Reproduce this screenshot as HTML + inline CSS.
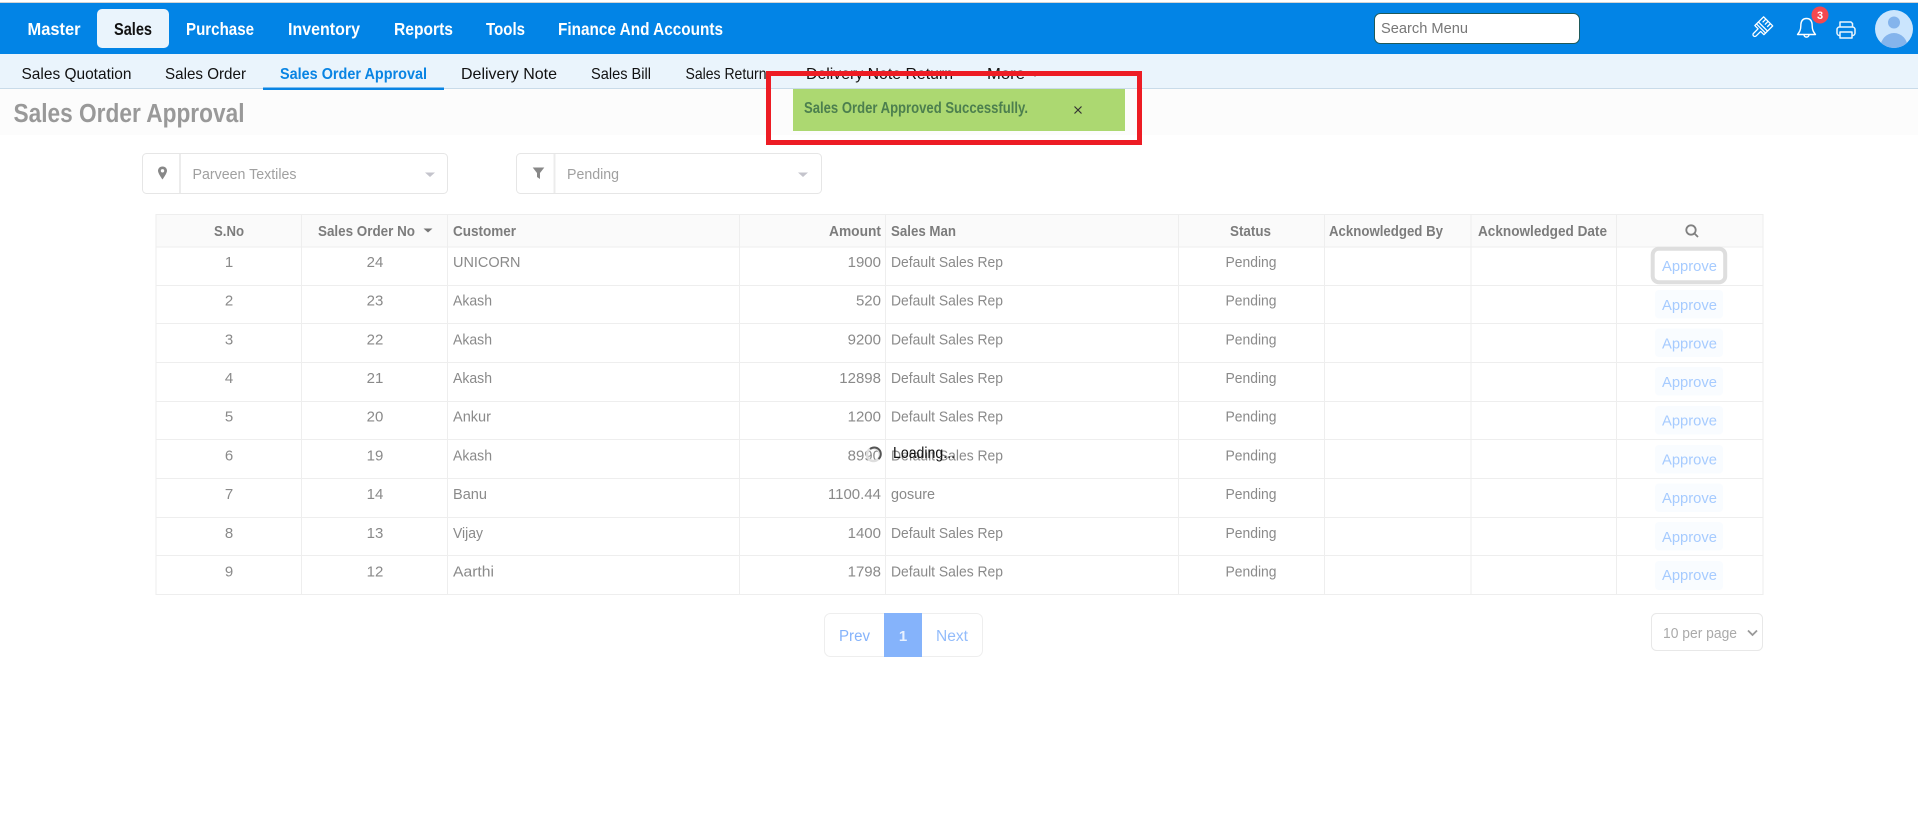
<!DOCTYPE html>
<html lang="en">
<head>
<meta charset="utf-8">
<title>Sales Order Approval</title>
<style>
html,body{margin:0;padding:0;background:#fff;overflow:hidden}
svg{display:block;font-family:"Liberation Sans",Arial,sans-serif}
.nav{font-size:17.5px;font-weight:700;fill:#fff}
.sub{font-size:16px;fill:#111}
.h{font-size:14.8px;font-weight:700;fill:#7c7c7c}
.d{font-size:15.2px;fill:#8a8a8a}
.n{font-size:15px;fill:#8a8a8a}
.a{font-size:15.2px;fill:#a6cbff}
.btn{fill:#f9fcff}
.f{font-size:15.2px;fill:#a0a0a0}
.m{text-anchor:middle}
.e{text-anchor:end}
</style>
</head>
<body>
<svg width="1918" height="837" viewBox="0 0 1918 837" xmlns="http://www.w3.org/2000/svg">
<rect width="1918" height="837" fill="#fff"/>
<rect y="2" width="1918" height="1" fill="#d4d4d4"/>
<!-- top nav -->
<rect y="3" width="1918" height="51" fill="#0284e6"/>
<rect x="97" y="9" width="72" height="39" rx="5" fill="#eaf4fc"/>
<text class="nav" x="27.5" y="35" textLength="53" lengthAdjust="spacingAndGlyphs">Master</text>
<text class="nav" x="114" y="35" textLength="38" lengthAdjust="spacingAndGlyphs" style="fill:#111">Sales</text>
<text class="nav" x="186" y="35" textLength="68" lengthAdjust="spacingAndGlyphs">Purchase</text>
<text class="nav" x="288" y="35" textLength="72" lengthAdjust="spacingAndGlyphs">Inventory</text>
<text class="nav" x="394" y="35" textLength="59" lengthAdjust="spacingAndGlyphs">Reports</text>
<text class="nav" x="486" y="35" textLength="39" lengthAdjust="spacingAndGlyphs">Tools</text>
<text class="nav" x="558" y="35" textLength="165" lengthAdjust="spacingAndGlyphs">Finance And Accounts</text>
<!-- search -->
<rect x="1374.5" y="13.5" width="205" height="30" rx="6" fill="#fff" stroke="#1f5a5a"/>
<text x="1381" y="33" font-size="14.5" fill="#777" textLength="87" lengthAdjust="spacingAndGlyphs">Search Menu</text>
<!-- brush -->
<g transform="translate(1761,28.5) rotate(45) scale(.92)" fill="none" stroke="#fff" stroke-width="1.4" stroke-linejoin="round">
<path d="M-7 -11H7V0H-7Z"/>
<path d="M-7 -3H7M-3.5 -11V-6M0 -11V-6M3.5 -11V-6"/>
<path d="M-7 0V2.5H-2V9.5A2 2 0 0 0 2 9.5V2.5H7V0"/>
</g>
<!-- bell -->
<g fill="none" stroke="#fff" stroke-width="1.4" stroke-linejoin="round">
<path d="M1806.5 18.5C1802 18.5 1800.8 22 1800.8 26C1800.8 30 1799.5 32 1797.5 34.5H1815.5C1813.5 32 1812.2 30 1812.2 26C1812.2 22 1811 18.5 1806.5 18.5Z"/>
<path d="M1804 34.5C1804 38 1809 38 1809 34.5"/>
</g>
<circle cx="1820" cy="15" r="8.5" fill="#f4484f"/>
<text x="1820" y="19" class="m" font-size="11" font-weight="700" fill="#fff">3</text>
<!-- printer -->
<g fill="none" stroke="#fff" stroke-width="1.5" stroke-linejoin="round" opacity=".92">
<path d="M1840 27V22H1851L1852.5 23.5V27"/>
<rect x="1837" y="27" width="18" height="8.5" rx="2.5"/>
<path d="M1840 32H1852V38H1840Z" fill="#0284e6"/>
</g>
<!-- avatar -->
<clipPath id="av"><circle cx="1894" cy="29" r="19"/></clipPath>
<circle cx="1894" cy="29" r="19" fill="#cbe5fd"/>
<g clip-path="url(#av)" fill="#84b4ec">
<circle cx="1894" cy="22.5" r="6"/>
<ellipse cx="1894" cy="47" rx="13.5" ry="14"/>
</g>
<!-- sub nav -->
<rect y="54" width="1918" height="34" fill="#eaf4fc"/>
<rect y="88" width="1918" height="1" fill="#c9dbe9"/>
<text class="sub" x="21.5" y="79" textLength="110" lengthAdjust="spacingAndGlyphs">Sales Quotation</text>
<text class="sub" x="165" y="79" textLength="81" lengthAdjust="spacingAndGlyphs">Sales Order</text>
<text class="sub" x="280" y="79" textLength="147" lengthAdjust="spacingAndGlyphs" style="fill:#0984e3;font-weight:700">Sales Order Approval</text>
<rect x="263" y="87.5" width="181" height="2.5" fill="#0984e3"/>
<text class="sub" x="461" y="79" textLength="96" lengthAdjust="spacingAndGlyphs">Delivery Note</text>
<text class="sub" x="591" y="79" textLength="60" lengthAdjust="spacingAndGlyphs">Sales Bill</text>
<text class="sub" x="685.5" y="79" textLength="81" lengthAdjust="spacingAndGlyphs">Sales Return</text>
<text class="sub" x="806" y="79" textLength="147" lengthAdjust="spacingAndGlyphs">Delivery Note Return</text>
<text class="sub" x="987" y="79" textLength="38" lengthAdjust="spacingAndGlyphs">More</text>
<path d="M1032 74H1038L1035 77Z" fill="#888"/>
<!-- page heading -->
<rect y="89" width="1918" height="46" fill="#fcfcfc"/>
<rect x="263" y="87.5" width="181" height="2.5" fill="#0984e3"/>
<text x="13.5" y="122" font-size="25.5" font-weight="700" fill="#999" textLength="231" lengthAdjust="spacingAndGlyphs">Sales Order Approval</text>
<!-- toast -->
<rect x="793" y="89" width="332" height="42" fill="#acd871"/>
<text x="804" y="113" font-size="15.5" font-weight="700" fill="#4c7f4e" textLength="224" lengthAdjust="spacingAndGlyphs">Sales Order Approved Successfully.</text>
<path d="M1074.5 106.5L1081.5 113.5M1081.5 106.5L1074.5 113.5" stroke="#333" stroke-width="1.2" fill="none"/>
<rect x="768.5" y="73.5" width="371" height="69" fill="none" stroke="#ed1c24" stroke-width="5"/>
<!-- filters -->
<rect x="142.5" y="153.5" width="305" height="40" rx="4" fill="#fff" stroke="#e6e6e6"/>
<rect x="179" y="154" width="2" height="39" fill="#ececec"/>
<path d="M162.5 166.5C159.5 166.5 158 168.7 158 170.8C158 173.5 162.5 179.5 162.5 179.5C162.5 179.5 167 173.5 167 170.8C167 168.7 165.5 166.5 162.5 166.5ZM162.5 172.5A1.7 1.7 0 1 1 162.5 169.1A1.7 1.7 0 1 1 162.5 172.5Z" fill="#888" fill-rule="evenodd"/>
<text class="f" x="192.5" y="179" textLength="104" lengthAdjust="spacingAndGlyphs">Parveen Textiles</text>
<path d="M425 172.5H435L430 177Z" fill="#c4c4cc"/>
<rect x="516.5" y="153.5" width="305" height="40" rx="4" fill="#fff" stroke="#e6e6e6"/>
<rect x="553.5" y="154" width="2" height="39" fill="#ececec"/>
<path d="M532.7 167.5H544.3L540 173V179L537 177V173Z" fill="#888"/>
<text class="f" x="567" y="179" textLength="52" lengthAdjust="spacingAndGlyphs">Pending</text>
<path d="M798 172.5H808L803 177Z" fill="#c4c4cc"/>
<!-- table -->
<rect x="156" y="214" width="1607" height="33" fill="#fafafa"/>
<g fill="#eeeeee">
<rect x="156" y="214" width="1607" height="1"/>
<rect x="156" y="246.5" width="1607" height="1"/>
<rect x="156" y="285" width="1607" height="1"/>
<rect x="156" y="323" width="1607" height="1"/>
<rect x="156" y="362" width="1607" height="1"/>
<rect x="156" y="401" width="1607" height="1"/>
<rect x="156" y="439" width="1607" height="1"/>
<rect x="156" y="478" width="1607" height="1"/>
<rect x="156" y="517" width="1607" height="1"/>
<rect x="156" y="555" width="1607" height="1"/>
<rect x="156" y="594" width="1607" height="1"/>
<rect x="155.5" y="214" width="1" height="381"/>
<rect x="301" y="214" width="1" height="381"/>
<rect x="447" y="214" width="1" height="381"/>
<rect x="739" y="214" width="1" height="381"/>
<rect x="885" y="214" width="1" height="381"/>
<rect x="1178" y="214" width="1" height="381"/>
<rect x="1324" y="214" width="1" height="381"/>
<rect x="1470.5" y="214" width="1" height="381"/>
<rect x="1616" y="214" width="1" height="381"/>
<rect x="1762.5" y="214" width="1" height="381"/>
</g>
<text class="h" x="214" y="236" textLength="30" lengthAdjust="spacingAndGlyphs">S.No</text>
<text class="h" x="318" y="236" textLength="97" lengthAdjust="spacingAndGlyphs">Sales Order No</text>
<path d="M423.5 228.5H432.5L428 232.5Z" fill="#777"/>
<text class="h" x="453" y="236" textLength="63" lengthAdjust="spacingAndGlyphs">Customer</text>
<text class="h" x="829" y="236" textLength="52" lengthAdjust="spacingAndGlyphs">Amount</text>
<text class="h" x="891" y="236" textLength="65" lengthAdjust="spacingAndGlyphs">Sales Man</text>
<text class="h" x="1230" y="236" textLength="41" lengthAdjust="spacingAndGlyphs">Status</text>
<text class="h" x="1329" y="236" textLength="114" lengthAdjust="spacingAndGlyphs">Acknowledged By</text>
<text class="h" x="1478" y="236" textLength="129" lengthAdjust="spacingAndGlyphs">Acknowledged Date</text>
<g fill="none" stroke="#808080" stroke-width="1.8"><circle cx="1691" cy="230" r="4.7"/><path d="M1694.5 233.5L1698 237"/></g>

<!-- rows -->
<rect x="1652.7" y="248.7" width="72.5" height="33.5" rx="6" fill="#fff" stroke="#dedede" stroke-width="4"/>
<text class="n m" x="229" y="267">1</text><text class="n m" x="375" y="267">24</text>
<text class="d" x="453" y="267" textLength="67.5" lengthAdjust="spacingAndGlyphs">UNICORN</text>
<text class="n e" x="881" y="267">1900</text>
<text class="d" x="891" y="267" textLength="112" lengthAdjust="spacingAndGlyphs">Default Sales Rep</text>
<text class="d" x="1225.5" y="267" textLength="51" lengthAdjust="spacingAndGlyphs">Pending</text>
<text class="a" x="1662" y="271" textLength="55" lengthAdjust="spacingAndGlyphs">Approve</text>

<text class="n m" x="229" y="305.5">2</text><text class="n m" x="375" y="305.5">23</text>
<text class="d" x="453" y="305.5" textLength="39" lengthAdjust="spacingAndGlyphs">Akash</text>
<text class="n e" x="881" y="305.5">520</text>
<text class="d" x="891" y="305.5" textLength="112" lengthAdjust="spacingAndGlyphs">Default Sales Rep</text>
<text class="d" x="1225.5" y="305.5" textLength="51" lengthAdjust="spacingAndGlyphs">Pending</text>
<rect class="btn" x="1655" y="290" width="68" height="28.5" rx="4"/>
<text class="a" x="1662" y="310" textLength="55" lengthAdjust="spacingAndGlyphs">Approve</text>

<text class="n m" x="229" y="344.5">3</text><text class="n m" x="375" y="344.5">22</text>
<text class="d" x="453" y="344.5" textLength="39" lengthAdjust="spacingAndGlyphs">Akash</text>
<text class="n e" x="881" y="344.5">9200</text>
<text class="d" x="891" y="344.5" textLength="112" lengthAdjust="spacingAndGlyphs">Default Sales Rep</text>
<text class="d" x="1225.5" y="344.5" textLength="51" lengthAdjust="spacingAndGlyphs">Pending</text>
<rect class="btn" x="1655" y="328.5" width="68" height="28.5" rx="4"/>
<text class="a" x="1662" y="348.5" textLength="55" lengthAdjust="spacingAndGlyphs">Approve</text>

<text class="n m" x="229" y="383">4</text><text class="n m" x="375" y="383">21</text>
<text class="d" x="453" y="383" textLength="39" lengthAdjust="spacingAndGlyphs">Akash</text>
<text class="n e" x="881" y="383">12898</text>
<text class="d" x="891" y="383" textLength="112" lengthAdjust="spacingAndGlyphs">Default Sales Rep</text>
<text class="d" x="1225.5" y="383" textLength="51" lengthAdjust="spacingAndGlyphs">Pending</text>
<rect class="btn" x="1655" y="367" width="68" height="28.5" rx="4"/>
<text class="a" x="1662" y="387" textLength="55" lengthAdjust="spacingAndGlyphs">Approve</text>

<text class="n m" x="229" y="421.5">5</text><text class="n m" x="375" y="421.5">20</text>
<text class="d" x="453" y="421.5" textLength="38" lengthAdjust="spacingAndGlyphs">Ankur</text>
<text class="n e" x="881" y="421.5">1200</text>
<text class="d" x="891" y="421.5" textLength="112" lengthAdjust="spacingAndGlyphs">Default Sales Rep</text>
<text class="d" x="1225.5" y="421.5" textLength="51" lengthAdjust="spacingAndGlyphs">Pending</text>
<rect class="btn" x="1655" y="406" width="68" height="28.5" rx="4"/>
<text class="a" x="1662" y="425.5" textLength="55" lengthAdjust="spacingAndGlyphs">Approve</text>

<text class="n m" x="229" y="460.5">6</text><text class="n m" x="375" y="460.5">19</text>
<text class="d" x="453" y="460.5" textLength="39" lengthAdjust="spacingAndGlyphs">Akash</text>
<text class="n e" x="881" y="460.5">8990</text>
<text class="d" x="891" y="460.5" textLength="112" lengthAdjust="spacingAndGlyphs">Default Sales Rep</text>
<text class="d" x="1225.5" y="460.5" textLength="51" lengthAdjust="spacingAndGlyphs">Pending</text>
<rect class="btn" x="1655" y="445" width="68" height="28.5" rx="4"/>
<text class="a" x="1662" y="464.5" textLength="55" lengthAdjust="spacingAndGlyphs">Approve</text>

<text class="n m" x="229" y="499">7</text><text class="n m" x="375" y="499">14</text>
<text class="d" x="453" y="499" textLength="34" lengthAdjust="spacingAndGlyphs">Banu</text>
<text class="n e" x="881" y="499">1100.44</text>
<text class="d" x="891" y="499" textLength="44" lengthAdjust="spacingAndGlyphs">gosure</text>
<text class="d" x="1225.5" y="499" textLength="51" lengthAdjust="spacingAndGlyphs">Pending</text>
<rect class="btn" x="1655" y="483.5" width="68" height="28.5" rx="4"/>
<text class="a" x="1662" y="503" textLength="55" lengthAdjust="spacingAndGlyphs">Approve</text>

<text class="n m" x="229" y="538">8</text><text class="n m" x="375" y="538">13</text>
<text class="d" x="453" y="538" textLength="30" lengthAdjust="spacingAndGlyphs">Vijay</text>
<text class="n e" x="881" y="538">1400</text>
<text class="d" x="891" y="538" textLength="112" lengthAdjust="spacingAndGlyphs">Default Sales Rep</text>
<text class="d" x="1225.5" y="538" textLength="51" lengthAdjust="spacingAndGlyphs">Pending</text>
<rect class="btn" x="1655" y="522" width="68" height="28.5" rx="4"/>
<text class="a" x="1662" y="542" textLength="55" lengthAdjust="spacingAndGlyphs">Approve</text>

<text class="n m" x="229" y="576.5">9</text><text class="n m" x="375" y="576.5">12</text>
<text class="d" x="453" y="576.5" textLength="41" lengthAdjust="spacingAndGlyphs">Aarthi</text>
<text class="n e" x="881" y="576.5">1798</text>
<text class="d" x="891" y="576.5" textLength="112" lengthAdjust="spacingAndGlyphs">Default Sales Rep</text>
<text class="d" x="1225.5" y="576.5" textLength="51" lengthAdjust="spacingAndGlyphs">Pending</text>
<rect class="btn" x="1655" y="561" width="68" height="29" rx="4"/>
<text class="a" x="1662" y="580" textLength="55" lengthAdjust="spacingAndGlyphs">Approve</text>

<!-- pagination -->
<rect x="824.5" y="613.5" width="158" height="43" rx="6" fill="#fff" stroke="#eeeeee"/>
<rect x="884" y="613" width="38" height="44" fill="#85b3fb"/>
<text x="839" y="641" font-size="15.5" fill="#85b3fb" textLength="31" lengthAdjust="spacingAndGlyphs">Prev</text>
<text x="903" y="641" class="m" font-size="15" font-weight="700" fill="#e8f1ff">1</text>
<text x="936" y="641" font-size="15.5" fill="#93bcfb" textLength="32" lengthAdjust="spacingAndGlyphs">Next</text>
<!-- per page -->
<rect x="1651.5" y="613.5" width="111" height="37" rx="5" fill="#fff" stroke="#e8e8e8"/>
<text x="1663" y="638" font-size="15.2" fill="#aaa" textLength="74" lengthAdjust="spacingAndGlyphs">10 per page</text>
<path d="M1748 630.5L1752.5 635L1757 630.5" fill="none" stroke="#999" stroke-width="1.8"/>
<!-- loading -->
<circle cx="873.5" cy="454.5" r="6.5" fill="none" stroke="#dedede" stroke-width="2.5"/>
<path d="M870 449A6.5 6.5 0 0 1 878.5 459" fill="none" stroke="#555" stroke-width="2"/>
<text x="893" y="458" font-size="16" fill="#111" textLength="62" lengthAdjust="spacingAndGlyphs">Loading...</text>
</svg>
</body>
</html>
